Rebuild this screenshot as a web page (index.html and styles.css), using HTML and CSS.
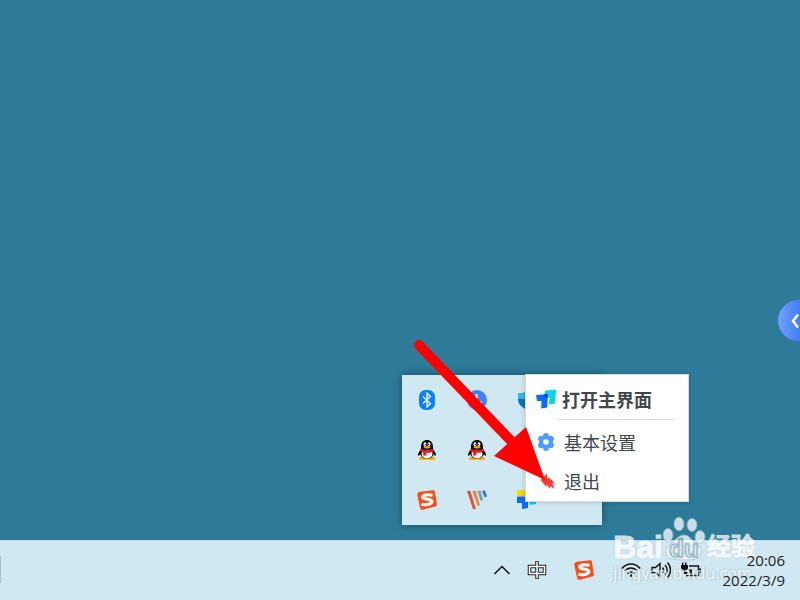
FILE: index.html
```html
<!DOCTYPE html>
<html lang="zh-CN">

<head>
    <meta charset="UTF-8">
    <title>桌面</title>
    <link rel="stylesheet" href="styles.css">
</head>

<body>
    <svg width="0" height="0" class="symbols" aria-hidden="true">
        <symbol id="qq" viewBox="1 1 18 20">
            <ellipse cx="6" cy="19.500" rx="4.200" ry="1.500" fill="#f5a800"/>
            <ellipse cx="14" cy="19.500" rx="4.200" ry="1.500" fill="#f5a800"/>
            <path d="M4 8C4 3.500 6.500 1 10 1s6 2.500 6 7v2c1.700 2 3.500 5 2.800 6.500-.5.600-1.600-.5-2-1.300-.8 2.800-3.300 4.300-6.800 4.300s-6-1.500-6.800-4.300c-.4.800-1.500 1.900-2 1.300C.5 15 2.300 12 4 10z" fill="#080808"/>
            <ellipse cx="10" cy="15" rx="5.500" ry="4.300" fill="#fff"/>
            <ellipse cx="8" cy="5.200" rx="1.400" ry="1.900" fill="#fff"/>
            <ellipse cx="12" cy="5.200" rx="1.400" ry="1.900" fill="#fff"/>
            <circle cx="8.500" cy="5.400" r=".7"/>
            <circle cx="11.500" cy="5.400" r=".7"/>
            <ellipse cx="10" cy="8.200" rx="3.500" ry="1.200" fill="#f5a800"/>
            <path d="M3.500 9.800c4 1.700 9 1.700 13 0l.5 2.500c-2.500 1.200-5 1.700-7.700 1.500v2.700H6.200v-3.200l-3-1z" fill="#e8192c"/>
        </symbol>
        <symbol id="sogou" viewBox="0 0 20 20">
            <path d="M3.200 1.800l12.600-1.600c1.200-.1 2 .5 2.200 1.700l1.900 12.300c.2 1.200-.5 2.200-1.600 2.400L5.600 19.800c-1.200.2-2.200-.4-2.400-1.600L.3 5C0 3.200 1.200 2.100 3.200 1.800z" fill="#fb4e17"/>
            <path d="M15.500 5.500C12 4.200 6 4.600 5.600 7c-.4 2.600 9 1.700 9.300 4.300.2 2.600-5.900 4.200-10.400 3" fill="none" stroke="#fff" stroke-width="3.200"/>
        </symbol>
    </svg>

    <main class="desktop">
        <button class="drawer" aria-label="展开">
            <svg width="10" height="16" viewBox="0 0 10 16"><path d="M9 1.500L4 8l5 6.500" fill="none" stroke="#fff" stroke-width="2.500"/></svg>
        </button>
    </main>

    <div class="watermark">
        <div class="brand">
            <span>Bai</span>
            <svg width="44" height="48" viewBox="0 0 44 48">
                <ellipse cx="5" cy="20" rx="5" ry="6.500"/>
                <ellipse cx="16" cy="9" rx="5" ry="6.800"/>
                <ellipse cx="29" cy="10" rx="5" ry="6.500"/>
                <ellipse cx="37" cy="22" rx="5" ry="6.500"/>
                <path d="M21 20c5 0 7 4 10 7 5 4 8 6 7 11-1 6-6 7-17 7S4 44 3 38c-1-5 3-7 7-11 3-3 6-7 11-7z"/>
                <text x="21" y="42" text-anchor="middle">du</text>
            </svg>
            <span class="cn">经验</span>
        </div>
        <div class="site">jingyan.baidu.com</div>
    </div>

    <footer class="taskbar">
        <span class="edge"></span>
        <div class="group">
            <button aria-label="显示隐藏的图标">
                <svg width="18" height="12" viewBox="0 0 18 12"><path d="M1.500 10L9 2.500l7.500 7.500" fill="none" stroke="#111" stroke-width="1.500"/></svg>
            </button>
            <button aria-label="中文输入">
                <svg width="20" height="20" viewBox="0 0 20 20">
                    <path d="M2.500 6.500h15v7h-15zM10 1v18" fill="none" stroke="#222" stroke-width="3.500"/>
                    <path d="M2.500 6.500h15v7h-15zM10 1.800v16.400" fill="none" stroke="#fff" stroke-width="1.500"/>
                </svg>
            </button>
        </div>
        <button aria-label="搜狗输入法"><svg width="20" height="20"><use href="#sogou"/></svg></button>
        <div class="group status">
            <button aria-label="网络">
                <svg width="20" height="16" viewBox="0 0 20 16" fill="none" stroke="#111" stroke-width="1.500">
                    <path d="M.8 6.500c5.200-6 13.200-6 18.400 0M3.700 9.200c3.700-4.300 8.900-4.300 12.600 0M6.500 11.800c2-2.500 5-2.500 7 0"/>
                    <circle cx="10" cy="13.500" r="1.600" fill="#111" stroke="none"/>
                </svg>
            </button>
            <button aria-label="音量">
                <svg width="20" height="18" viewBox="0 0 20 18" fill="none" stroke="#111" stroke-width="1.400">
                    <path d="M1 6.500h3.500L9 2.500v13l-4.500-4H1zM11.500 6.500c1.300 1.500 1.300 3.500 0 5M14 4c2.600 3 2.600 7 0 10M16.500 1.500c4 4.500 4 10.500 0 15"/>
                </svg>
            </button>
            <button aria-label="电源">
                <svg width="22" height="16" viewBox="0 0 22 16">
                    <path d="M2 .5h1.500V3H5V.5h1.500V3H8v3.500L6 8.500V12H4V8.500L1 6.500V3h1z" fill="#111"/>
                    <path d="M9 4h9.500v9.500H6.500V10" fill="none" stroke="#111" stroke-width="1.400"/>
                    <path d="M19 6.500h2v4h-2zM9 7.500h3v4H9z" fill="#111"/>
                </svg>
            </button>
        </div>
        <div class="clock">
            <time>20:06</time>
            <time>2022/3/9</time>
        </div>
    </footer>

    <section class="tray" aria-label="托盘">
        <button aria-label="蓝牙">
            <svg width="16" height="20" viewBox="0 0 16 20">
                <rect width="16" height="20" rx="6.500" fill="#0783fb"/>
                <path d="M4 6.500l7.500 7L8 17V3l3.500 3.500-7.500 7" fill="none" stroke="#fff" stroke-width="1.300"/>
            </svg>
        </button>
        <button aria-label="时钟">
            <svg width="20" height="20" viewBox="0 0 20 20">
                <circle cx="10" cy="10" r="10" fill="#3f80f7"/>
                <path d="M9.500 4v8.500H15" fill="none" stroke="#fff" stroke-width="2"/>
            </svg>
        </button>
        <button aria-label="安全中心">
            <svg width="20" height="20" viewBox="0 0 20 20">
                <path d="M1 3c4 .3 6.500-.6 9-2.500C12.500 2.400 15 3.300 19 3v6H1z" fill="#35b7ec"/>
                <path d="M1 9h18c0 5-3.500 8.500-9 10.500C4.500 17.500 1 14 1 9z" fill="#0872c4"/>
            </svg>
        </button>
        <span></span>
        <button aria-label="QQ"><svg width="18" height="20"><use href="#qq"/></svg></button>
        <button aria-label="QQ"><svg width="18" height="20"><use href="#qq"/></svg></button>
        <span></span>
        <span></span>
        <button aria-label="搜狗"><svg width="20" height="20"><use href="#sogou"/></svg></button>
        <button aria-label="工具">
            <svg width="20" height="20" viewBox="0 0 20 20">
                <path d="M0 1l3.300-.2L9 19l-3 .2z" fill="#d9583b"/>
                <path d="M5.300 1l3.300-.2L13 15l-2.500.8z" fill="#e08a4b"/>
                <path d="M10.500 1l3-.2L16 10l-2.500.8z" fill="#6fa79c"/>
                <path d="M15 .8l3-.3 2 6-2.500.8z" fill="#3f72c4"/>
            </svg>
        </button>
        <button aria-label="待办">
            <svg width="20" height="20" viewBox="0 0 20 20">
                <path d="M0 6.500h11V18l-6 1v-6H0z" fill="#0b6cfb"/>
                <path d="M11 6.500h8V14l-6 1z" fill="#0bd0df"/>
                <path d="M0 0h12v6H0z" fill="#f3d900"/>
            </svg>
        </button>
    </section>

    <nav class="menu">
        <button class="main-item">
            <svg width="20" height="20" viewBox="0 0 20 20">
                <path d="M9 1.500L20 .5l-1 14-6 1 .5-7H8z" fill="#0bd5df"/>
                <path d="M0 6l12-1-.8 13.500-6 1 .3-7.500H1z" fill="#0b6cfb"/>
                <path d="M8.500 5.300l3.500-.3-.2 3.500H8.200z" fill="#0a45c8"/>
            </svg>
            打开主界面
        </button>
        <hr>
        <button>
            <svg width="18" height="18" viewBox="0 0 18 18">
                <path d="M6.500 2.800L7.200.8h3.600l.7 2 1.500.9 2.200-.5 1.700 3-1.500 1.600v2.400l1.500 1.600-1.700 3-2.200-.5-1.500.9-.7 2H7.200l-.7-2-1.500-.9-2.200.5-1.700-3 1.500-1.600V7.800L1.100 6.200l1.700-3 2.200.5z" fill="#4c9bff" stroke="#4c9bff" stroke-linejoin="round"/>
                <circle cx="9" cy="9" r="2.800" fill="#fff"/>
            </svg>
            基本设置
        </button>
        <button>
            <svg width="18" height="18" viewBox="0 0 18 18">
                <path d="M3.500 8L10 1.500v4c4 1 6.800 3.500 7.300 6.500l-2.300-1.500 2.500 6.500-4.500-3v3l-3.500-5v3z" fill="#fb3a32"/>
            </svg>
            退出
        </button>
    </nav>

    <svg class="arrow" width="132" height="142" viewBox="0 0 132 142">
        <path d="M5 5l98 102" stroke="#f00" stroke-width="10" stroke-linecap="round"/>
        <path d="M112 87l19 53-51-24z" fill="#f00"/>
    </svg>
</body>

</html>
```

FILE: styles.css
```css
* {
    box-sizing: border-box;
}

body {
    position: relative;
    display: flex;
    flex-direction: column;
    min-height: 100vh;
    margin: 0;
    overflow: hidden;
    font-family: "Noto Sans", "Noto Sans CJK SC", sans-serif;
    background-color: #2d7b99;
}

button {
    display: flex;
    justify-content: center;
    align-items: center;
    padding: 0;
    border: none;
    background: none;
    font: inherit;
    cursor: pointer;
}

.symbols {
    position: absolute;
}

.desktop {
    display: flex;
    flex: 1;
    justify-content: flex-end;
    align-items: flex-start;
    padding-top: 300px;
}

.drawer {
    width: 22px;
    height: 41px;
    padding-left: 10px;
    border-radius: 21px 0 0 21px;
    background: linear-gradient(90deg, #70a2ff, #427cf8);
}

.taskbar {
    display: flex;
    justify-content: flex-end;
    align-items: center;
    gap: 17px;
    height: 60px;
    padding: 0 15px 2px 0;
    border-top: 1px solid #bfd9e4;
    background-color: #d0e8f2;
}

.taskbar button {
    width: 30px;
    height: 40px;
}

.edge {
    width: 1px;
    height: 27px;
    margin-right: auto;
    background-color: #a3c6c8;
}

.group {
    display: flex;
    gap: 5px;
}

.status {
    gap: 0;
}

.clock {
    z-index: 2;
    display: flex;
    flex-direction: column;
    font-family: "Open Sans", sans-serif;
    font-size: 15px;
    line-height: 20px;
    text-align: right;
    color: #1c1c1c;
}

/* Hidden icons flyout */
.tray {
    position: absolute;
    right: 198px;
    bottom: 75px;
    display: grid;
    grid-template-columns: repeat(4, 50px);
    grid-auto-rows: 50px;
    background-color: #d0e8f2;
    box-shadow: 0 0 8px rgba(0, 0, 0, 0.4);
}

.menu {
    position: absolute;
    right: 111px;
    bottom: 98px;
    width: 164px;
    padding-top: 6px;
    border: 1px solid #d8dcde;
    background-color: #fff;
    box-shadow: 0 0 5px rgba(0, 0, 0, 0.2);
}

.menu button {
    justify-content: flex-start;
    gap: 9px;
    width: 100%;
    height: 39px;
    padding: 0 0 2px 11px;
    font-size: 18px;
    color: #41464d;
}

.menu .main-item {
    gap: 6px;
    height: 38px;
    padding-left: 10px;
    font-weight: bold;
}

.menu hr {
    height: 1px;
    margin: 0 13px 3px 31px;
    border: none;
    background-color: #dcdcdc;
}

.watermark {
    position: absolute;
    z-index: 1;
    right: 45px;
    bottom: 19px;
    color: #fff;
    opacity: 0.75;
    text-shadow: 0 0 2px rgba(70, 110, 130, 0.7);
    pointer-events: none;
}

.brand {
    display: flex;
    align-items: flex-end;
    margin-bottom: 2px;
    font-family: "Liberation Sans", "Noto Sans CJK SC", sans-serif;
    font-size: 32px;
    font-weight: bold;
    line-height: 32px;
    -webkit-text-stroke: 1px #fff;
}

.brand svg {
    fill: #fff;
    stroke: #a9c3ce;
    stroke-width: 1px;
}

.brand text {
    font-size: 24px;
    -webkit-text-stroke: 0;
    stroke: #86a9b8;
}

.brand .cn {
    font-size: 24px;
}

.site {
    font-family: "Noto Sans", sans-serif;
    font-size: 16px;
    line-height: 16px;
}

.arrow {
    position: absolute;
    z-index: 2;
    right: 254px;
    bottom: 118px;
    pointer-events: none;
}
```
